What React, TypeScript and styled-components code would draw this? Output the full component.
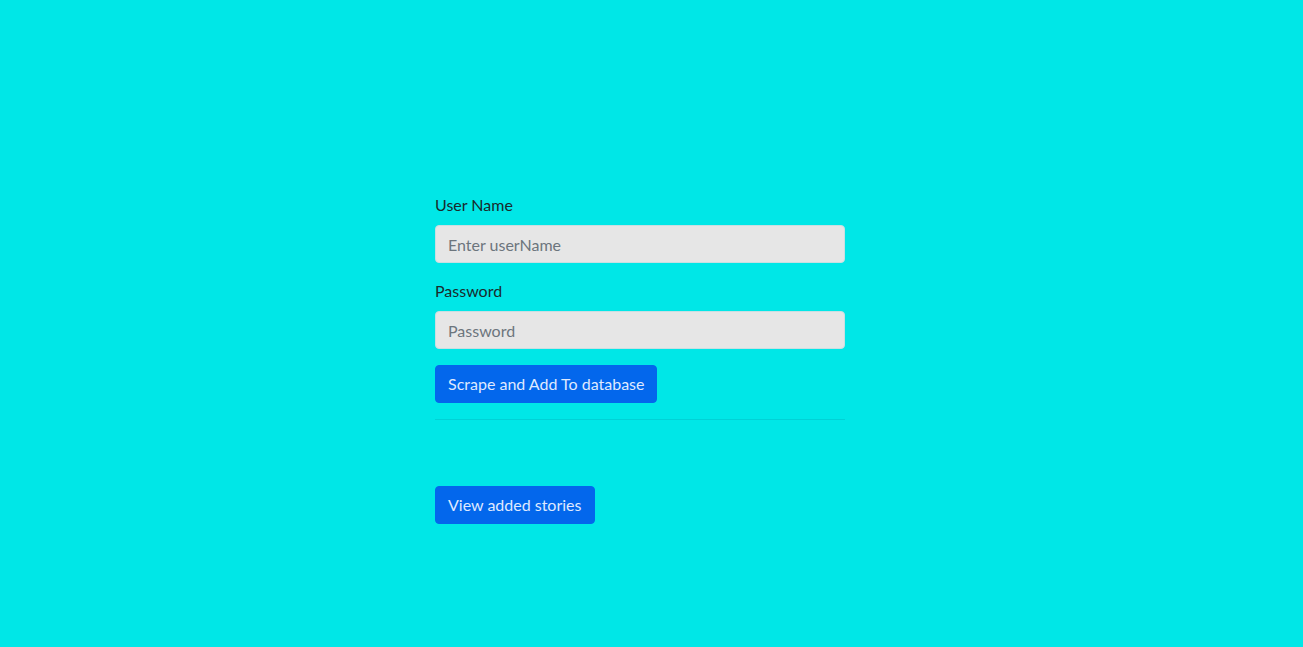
import React, {useState} from 'react';
import styled, {createGlobalStyle} from 'styled-components';

const GlobalStyle = createGlobalStyle`
  * {
    box-sizing: border-box;
  }
  body {
    margin: 0;
    background-color: #00e7e7;
    font-family: Lato, "Liberation Sans", sans-serif;
    font-size: 16px;
    line-height: 1.5;
    color: #212529;
  }
`;

const Page = styled.div`
  min-height: 100vh;
  padding: 193px 0 0 435px;
`;

const Form = styled.form`
  width: 410px;
  display: flex;
  flex-direction: column;
  align-items: flex-start;
`;

const Group = styled.div`
  width: 100%;
  margin-bottom: 16px;
`;

const Label = styled.label`
  display: block;
  margin-bottom: 8px;
  color: #1a2a2c;
`;

const InputField = styled.input`
  display: block;
  width: 100%;
  height: 38px;
  padding: 6px 12px;
  font-family: inherit;
  font-size: 16px;
  color: #212529;
  background-color: #e6e6e6;
  border: 1px solid #c9dfe2;
  border-radius: 4px;
  outline: none;

  &::placeholder {
    color: #6c757d;
  }
`;

const Button = styled.button`
  height: 38px;
  padding: 6px 12px;
  font-family: inherit;
  font-size: 16px;
  line-height: 1.5;
  color: #dfe9ff;
  background-color: #0367ec;
  border: 1px solid #0367ec;
  border-radius: 4px;
  cursor: pointer;
`;

const Divider = styled.hr`
  width: 100%;
  margin: 16px 0 66px;
  border: 0;
  border-top: 1px solid #00d2d6;
`;

function App() {
  const [userName, setUserName] = useState('');
  const [password, setPassword] = useState('');

  const handleSubmit = (e: React.FormEvent) => {
    e.preventDefault();
  };

  return (
    <>
      <GlobalStyle />
      <Page>
        <Form onSubmit={handleSubmit}>
          <Group>
            <Label>User Name</Label>
            <InputField
              type="text"
              placeholder="Enter userName"
              value={userName}
              onChange={(e) => setUserName(e.target.value)}
            />
          </Group>
          <Group>
            <Label>Password</Label>
            <InputField
              type="password"
              placeholder="Password"
              value={password}
              onChange={(e) => setPassword(e.target.value)}
            />
          </Group>
          <Button type="submit">Scrape and Add To database</Button>
          <Divider />
          <Button type="button">View added stories</Button>
        </Form>
      </Page>
    </>
  );
}

export default App;
